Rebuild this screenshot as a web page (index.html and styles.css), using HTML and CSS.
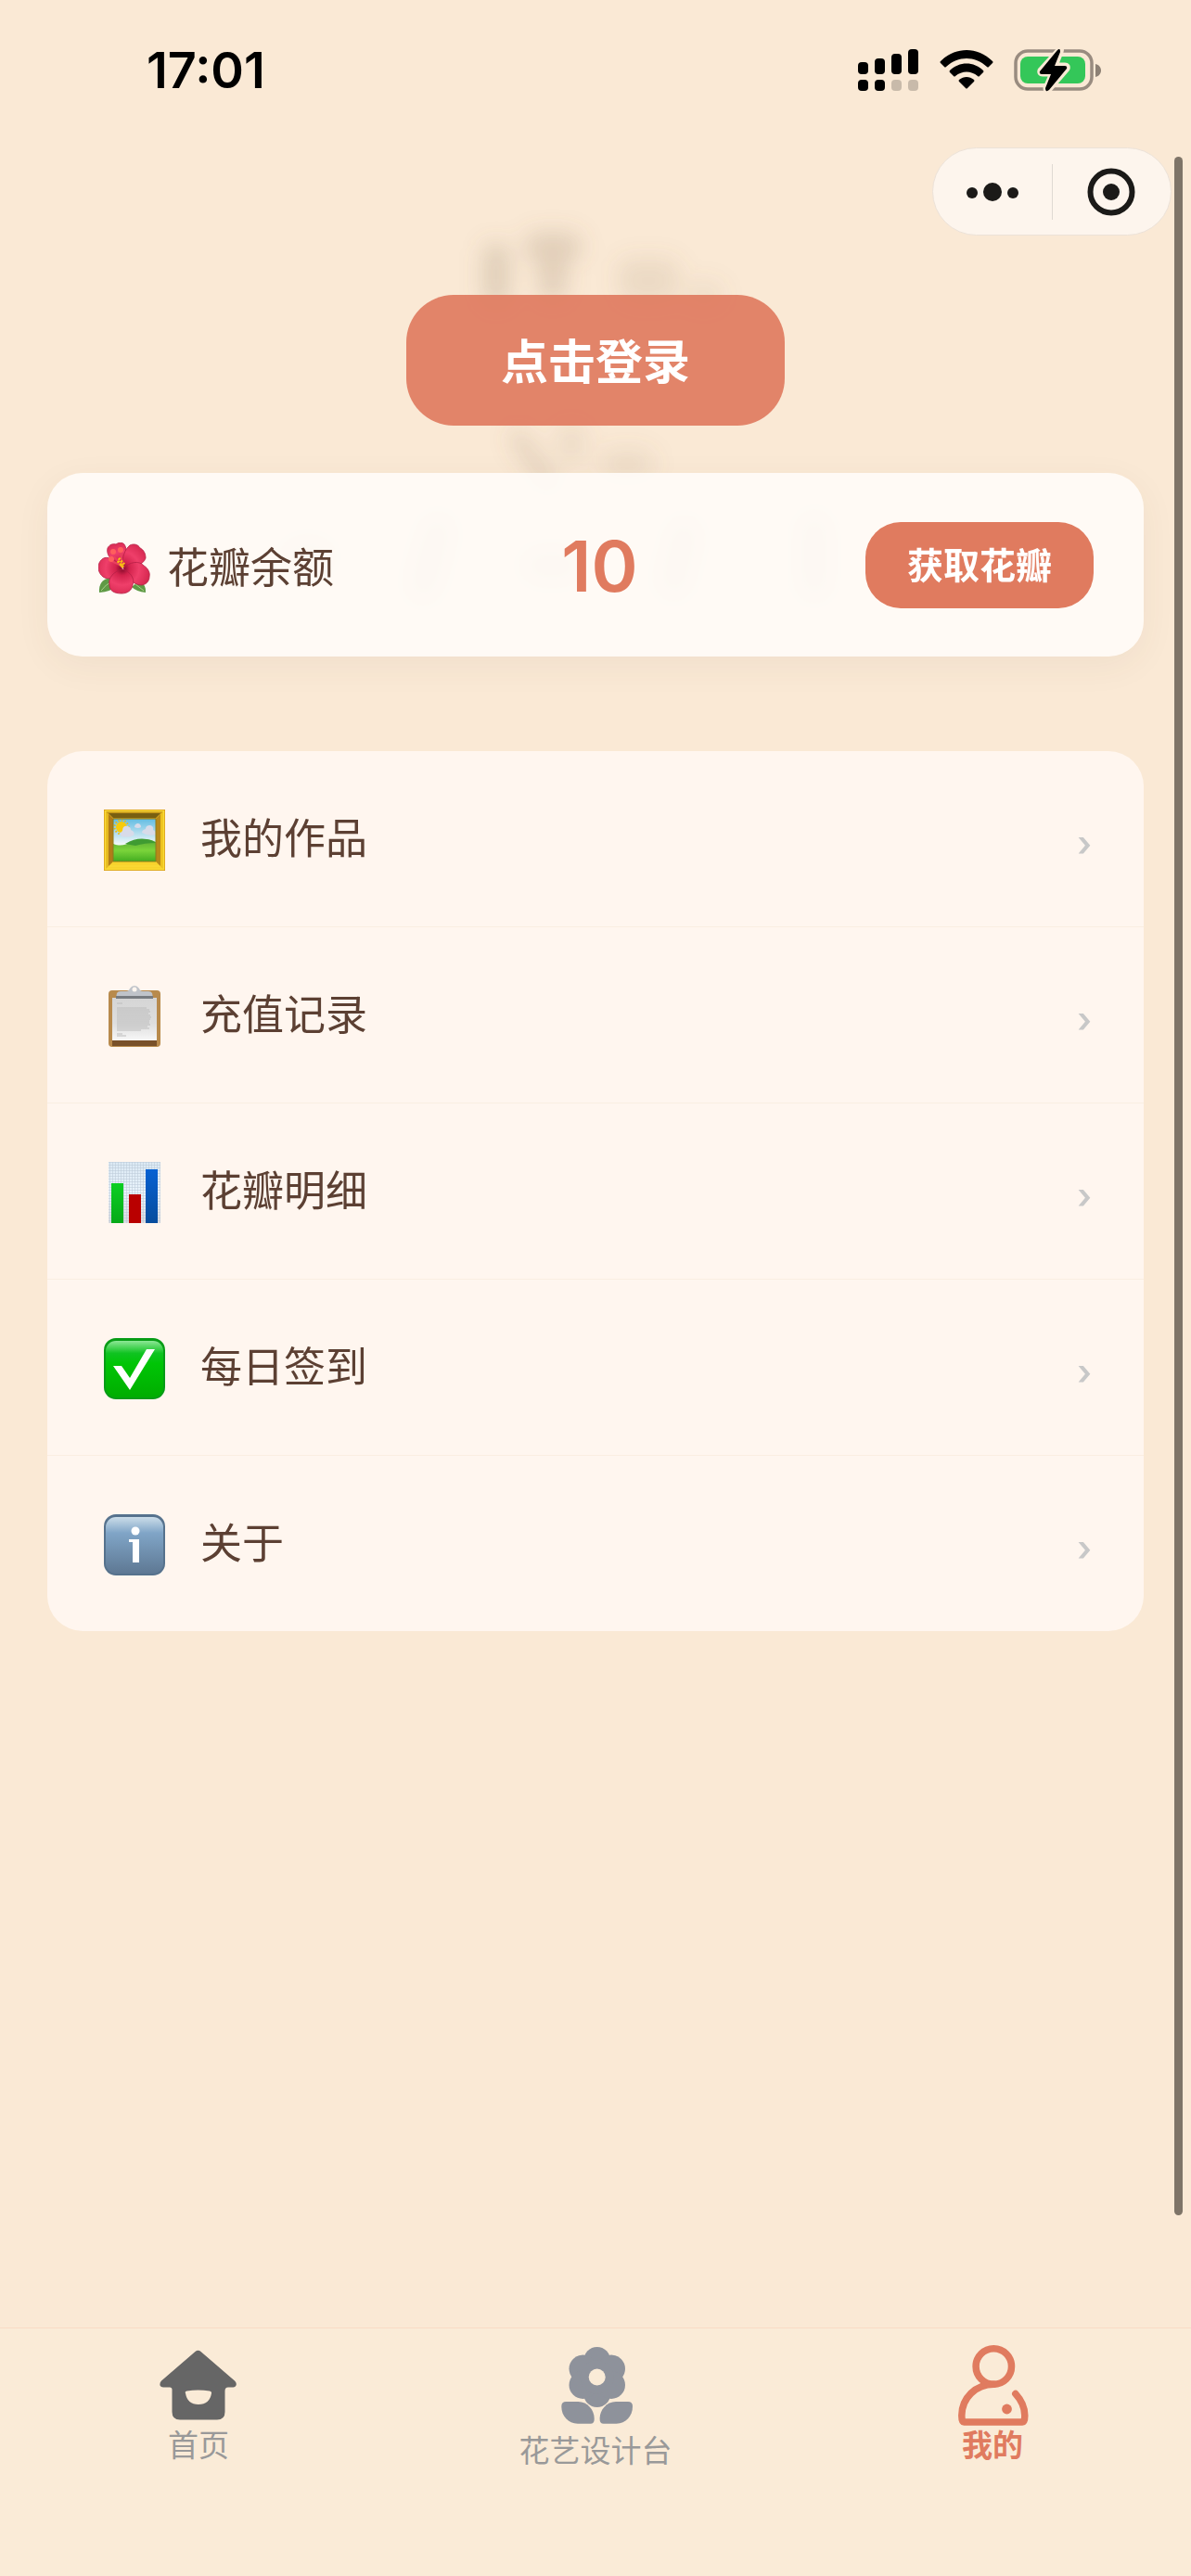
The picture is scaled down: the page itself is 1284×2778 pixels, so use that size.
FILE: index.html
```html
<!DOCTYPE html>
<html lang="zh-CN">
<head>
  <meta charset="UTF-8">
  <meta name="viewport" content="width=device-width, initial-scale=1.0">
  <title>我的</title>
  <link rel="stylesheet" href="styles.css">
</head>
<body>
  <div class="page">
    <!-- blurred backdrop -->
    <svg class="backdrop" viewBox="0 0 900 460" aria-hidden="true">
      <defs>
        <filter id="soft" x="-20%" y="-20%" width="140%" height="140%"><feGaussianBlur stdDeviation="12"/></filter>
      </defs>
      <g filter="url(#soft)" fill="none" stroke="#8a7458" stroke-linecap="round">
        <path d="M343 76v40" stroke-width="28" opacity=".24"/>
        <path d="M388 66h32M404 72v38" stroke-width="30" opacity=".22"/>
        <path d="M488 94h38M490 112h34" stroke-width="30" opacity=".13"/>
        <path d="M560 118h14" stroke-width="28" opacity=".1"/>
        <path d="M366 272l34 48" stroke-width="16" opacity=".22"/>
        <path d="M424 272v14M470 300h28" stroke-width="32" opacity=".11"/>
        <path d="M130 400h20M280 372l-16 60M388 410h30M546 376l-12 52M686 370v60" stroke-width="34" opacity=".2"/>
      </g>
    </svg>

    <div class="status-bar">
      <span class="time">17:01</span>
      <div class="status-icons">
        <svg width="66" height="46" viewBox="0 0 66 46" aria-label="信号">
          <rect x="0" y="14" width="11" height="13" rx="4"/>
          <rect x="18" y="10" width="11" height="17" rx="4"/>
          <rect x="36" y="5" width="11" height="22" rx="4"/>
          <rect x="54" y="0" width="11" height="27" rx="4"/>
          <rect x="0" y="33" width="11" height="12" rx="4"/>
          <rect x="18" y="33" width="11" height="12" rx="4"/>
          <rect x="36" y="33" width="11" height="12" rx="4" opacity=".2"/>
          <rect x="54" y="33" width="11" height="12" rx="4" opacity=".2"/>
        </svg>
        <svg width="58" height="46" viewBox="0 0 58 46" aria-label="无线网络">
          <path d="M1 13C17-3 41-3 57 13q1 1 0 2l-4 4q-1 1-2 0C38 7 20 7 7 19q-1 1-2 0l-4-4q-1-1 0-2z"/>
          <path d="M11 23c10-10 26-10 36 0q1 1 0 2l-4 4q-1 1-2 0c-7-6-17-6-24 0q-1 1-2 0l-4-4q-1-1 0-2z"/>
          <path d="M21 33c5-4 11-4 16 0q1 1 0 2l-7 7q-1 1-2 0l-7-7q-1-1 0-2z"/>
        </svg>
        <svg width="94" height="46" viewBox="0 0 94 46" aria-label="充电中">
          <rect x="2" y="2" width="82" height="41" rx="13" fill="none" stroke="#998c80" stroke-width="3.5"/>
          <path d="M88 16c8 2 8 12 0 14z" fill="#8d8175"/>
          <rect x="7" y="8" width="70" height="29" rx="8" fill="#34c759"/>
          <path d="M50 0L29 23q-1 3 2 3h11l-7 16q0 4 3 1l19-22q1-3-2-3H44l6-15q1-4 0-3z" stroke="#fae9d5" stroke-width="7" stroke-linejoin="round"/>
          <path d="M47 1L28 24q-1 3 2 3h10l-6 15q0 5 4 2l19-23q1-3-2-3H44l6-15q0-5-3-2z"/>
        </svg>
      </div>
    </div>

    <div class="capsule">
      <button class="capsule-btn" aria-label="更多">
        <svg width="56" height="20" viewBox="0 0 56 20"><circle cx="6" cy="11" r="6"/><circle cx="28" cy="10" r="10"/><circle cx="50" cy="11" r="6"/></svg>
      </button>
      <button class="capsule-btn" aria-label="关闭">
        <svg width="52" height="52" viewBox="0 0 52 52"><circle cx="26" cy="26" r="22.5" fill="none" stroke="#1b1a18" stroke-width="6"/><circle cx="26" cy="26" r="9"/></svg>
      </button>
    </div>

    <main class="content">
      <button class="login-btn">点击登录</button>

      <section class="balance-card">
        <div class="balance-label">
          <svg width="56" height="56" viewBox="0 0 56 56" aria-hidden="true">
            <defs>
              <radialGradient id="petal" gradientUnits="userSpaceOnUse" cx="26" cy="28" r="30"><stop offset="0" stop-color="#7d0826"/><stop offset=".25" stop-color="#d2224c"/><stop offset=".6" stop-color="#ef3f6a"/><stop offset="1" stop-color="#d62850"/></radialGradient>
            </defs>
            <path d="M1 54Q0 40 13 38l6 9Q14 53 1 54z" fill="#5f9a45"/>
            <path d="M51 54Q52 46 44 41l-8 7q5 5 15 6z" fill="#5f9a45"/>
            <path d="M3 52q5-7 12-10M49 52l-9-7" stroke="#a9ce89" fill="none"/>
            <g fill="url(#petal)" stroke="#b51f45" stroke-width=".8">
              <path d="M26 27C15 21 8 14 10 6c2-4 6-5 9-4 4-3 9-2 10 2 3 6 0 15-3 23z"/>
              <path d="M26 27c-1-11 3-20 8-24 4-2 9-1 11 3 4 2 6 6 6 11-3 8-14 10-25 10z"/>
              <path d="M26 29C22 39 10 41 5 37c-5-4-6-10-4-15 3-6 8-7 13-4 6 2 10 6 12 11z"/>
              <path d="M27 28c6-7 17-9 22-3 5 3 7 8 6 12 0 5-4 9-9 9-10-1-16-9-19-18z"/>
              <path d="M26 29c8 2 14 10 11 17-1 6-6 9-12 9-8 0-13-3-13-9-2-8 5-15 14-17z"/>
            </g>
            <path d="M26 27l-9-12M26 24l-2-14M25 25l-11-5" stroke="#e8405f" stroke-width="2"/>
            <path d="M22 17l7 8M21 20l6 7M24 24l3 2" stroke="#f8bd16" stroke-width="3" stroke-dasharray="2 1.5"/>
            <g fill="#ff5f5d"><circle cx="16" cy="10" r="3"/><circle cx="24" cy="8" r="3"/><circle cx="14" cy="18" r="3"/></g>
          </svg>
          <span>花瓣余额</span>
        </div>
        <strong class="balance-value">10</strong>
        <button class="get-btn">获取花瓣</button>
      </section>

      <nav class="menu">
        <a class="menu-item" href="#works">
          <svg class="menu-icon" viewBox="0 0 66 66" aria-hidden="true">
            <defs>
              <linearGradient id="sky" x2="0" y2="1"><stop offset="0" stop-color="#62bce2"/><stop offset=".6" stop-color="#f2f8f8"/></linearGradient>
              <linearGradient id="hill" x2="0" y2="1"><stop offset="0" stop-color="#58a834"/><stop offset=".5" stop-color="#7bd43b"/><stop offset="1" stop-color="#43ad20"/></linearGradient>
            </defs>
            <path d="M0 0h66v66H0z" fill="#d79b1c"/>
            <path d="M1 1h64L56 10H10z" fill="#c89a1b"/>
            <path d="M1 1l9 9v46l-9 9z" fill="#e5b81f"/>
            <path d="M65 1l-9 9v46l9 9z" fill="#edc31f"/>
            <path d="M1 65l9-9h46l9 9z" fill="#f8d32d"/>
            <path d="M1.500 1.500h63v63h-63zM5 61h56" fill="none" stroke="#f9da36" stroke-width="1.500"/>
            <path d="M5 4h56l-5 5H10z" fill="#795f11"/>
            <path d="M5 5l5 5v46l-5 5z" fill="#b17c18"/>
            <path d="M61 5l-5 5v46l5 5z" fill="#b88918"/>
            <path d="M10 10h46v46H10z" fill="url(#sky)"/>
            <path d="M10 37c8 3 13 1 21-2 10-4 17-4 25 0v21H10z" fill="url(#hill)"/>
            <path d="M23 37q12-7 23-5 7 1 10 4-12 0-22 3z" fill="#3f9b32"/>
            <circle cx="19" cy="19" r="6" fill="#f7cb0b"/>
            <circle cx="19" cy="19" r="7.500" fill="none" stroke="#edbb0d" stroke-width="2" stroke-dasharray="1.500 2"/>
            <path d="M19 29q-3-3 1-6 0-6 6-5 3 1 3 4 5 2 3 6-6 3-13 1zM41 25q0-3 4-4 0-4 5-4 4 1 3 5 3 1 3 5-8 2-15-2zM33 19q0-3 3-4 4 0 4 4-3 2-7 0z" fill="#d8dbe9"/>
            <path d="M10 10h46v46H10z" fill="none" stroke="#8b7a1c" stroke-width="1"/>
          </svg>
          <span class="menu-text">我的作品</span>
          <span class="arrow">›</span>
        </a>
        <a class="menu-item" href="#recharge">
          <svg class="menu-icon" viewBox="0 0 66 66" aria-hidden="true">
            <defs>
              <linearGradient id="paper" x2="0" y2="1"><stop offset="0" stop-color="#d5d5d5"/><stop offset=".6" stop-color="#dedede"/><stop offset="1" stop-color="#f7f7f7"/></linearGradient>
            </defs>
            <rect x="5" y="5" width="56" height="61" rx="4" fill="#b88a4c"/>
            <path d="M9 59h48v6H9z" fill="#79512a"/>
            <path d="M9 13h48v46H9z" fill="url(#paper)"/>
            <path d="M14 19h6M14 24h32M14 26h35M14 28h36M14 30h34M14 32h36M14 34h37M14 36h36M14 38h35M14 40h35M14 42h36M14 44h33M14 46h35M14 48h26M14 52h6M14 54h10" fill="none" stroke="#bcbcbc" stroke-width="1"/>
            <path d="M14 8q1-2 4-2h6q3 0 4-3 2-3 5-3t5 3q1 3 4 3h6q3 0 4 2l1 5H13z" fill="#bfc3c9"/>
            <path d="M13 11h40v3H13z" fill="#777b80"/>
            <circle cx="33" cy="4" r="2.500" fill="#fff6ef"/>
          </svg>
          <span class="menu-text">充值记录</span>
          <span class="arrow">›</span>
        </a>
        <a class="menu-item" href="#petals">
          <svg class="menu-icon" viewBox="0 0 66 66" aria-hidden="true">
            <defs>
              <pattern id="gridlines" width="3" height="3" patternUnits="userSpaceOnUse"><path d="M0 0h3M0 0v3" stroke="#b9c8d6" stroke-width="1"/></pattern>
              <linearGradient id="chartbg" x2="0" y2="1"><stop offset="0" stop-color="#dbe9f4"/><stop offset=".5" stop-color="#eaf4fc"/><stop offset="1" stop-color="#dcdce0"/></linearGradient>
              <linearGradient id="green" x2="0" y2="1"><stop offset="0" stop-color="#0bcf23"/><stop offset="1" stop-color="#07a918"/></linearGradient>
              <linearGradient id="blue" x2="0" y2="1"><stop offset="0" stop-color="#0762d3"/><stop offset="1" stop-color="#064c9d"/></linearGradient>
            </defs>
            <path d="M5 0h56v66H5z" fill="url(#chartbg)"/>
            <path d="M5 0h56v66H5z" fill="url(#gridlines)"/>
            <path d="M8 23h13v43H8z" fill="url(#green)"/>
            <path d="M27 35h13v31H27z" fill="#b90000"/>
            <path d="M45 8h13v58H45z" fill="url(#blue)"/>
          </svg>
          <span class="menu-text">花瓣明细</span>
          <span class="arrow">›</span>
        </a>
        <a class="menu-item" href="#checkin">
          <svg class="menu-icon" viewBox="0 0 66 66" aria-hidden="true">
            <defs>
              <linearGradient id="shine" x2="0" y2="1"><stop offset="0" stop-color="#8ce795"/><stop offset=".22" stop-color="#0fc321"/><stop offset=".4" stop-color="#00c506"/><stop offset="1" stop-color="#00ad00"/></linearGradient>
            </defs>
            <rect width="66" height="66" rx="13" fill="#079c16"/>
            <rect x="2" y="3" width="62" height="61" rx="11" fill="url(#shine)"/>
            <path d="M10 30h9l9 13 18-31h9L28 56z" fill="#fff"/>
          </svg>
          <span class="menu-text">每日签到</span>
          <span class="arrow">›</span>
        </a>
        <a class="menu-item" href="#about">
          <svg class="menu-icon" viewBox="0 0 66 66" aria-hidden="true">
            <defs>
              <linearGradient id="steel" x2="0" y2="1"><stop offset="0" stop-color="#cbdde9"/><stop offset=".28" stop-color="#80a5c7"/><stop offset="1" stop-color="#5e7893"/></linearGradient>
            </defs>
            <rect width="66" height="66" rx="13" fill="#56728d"/>
            <rect x="2" y="3" width="62" height="61" rx="11" fill="url(#steel)"/>
            <circle cx="34" cy="18" r="4.500" fill="#fff"/>
            <path d="M27 27h11v25h-7V30h-4z" fill="#fff"/>
          </svg>
          <span class="menu-text">关于</span>
          <span class="arrow">›</span>
        </a>
      </nav>
    </main>

    <nav class="tab-bar">
      <a class="tab" href="#home">
        <svg width="90" height="90" viewBox="0 0 90 90" aria-hidden="true">
          <path fill="#666" fill-rule="evenodd" d="M41.500 9q3-2.500 6 0L84 40.500q2.500 2.500 1.500 5-1 2-3 2H77q-3.500 0-3.500 4V74q0 8.500-8.500 8.500H25q-8.500 0-8.500-8.500V50q0-2.500-2.500-2.500H7q-2.500 0-3.500-2-.5-3 1.500-5zM31 54q-1-2 1.500-2.500 12-2 24.500 0 2.500.5 2 2.500-2 12-14 12T31 54z"/>
        </svg>
        <span>首页</span>
      </a>
      <a class="tab" href="#design">
        <svg width="90" height="96" viewBox="0 0 90 96" fill="#8e929b" aria-hidden="true">
          <mask id="core"><path d="M0 0h90v96H0z" fill="#fff"/><circle cx="46.700" cy="36.500" r="9" fill="#000"/></mask>
          <g mask="url(#core)">
            <circle cx="46.700" cy="18.500" r="14.500"/><circle cx="46.700" cy="54.500" r="14.500"/>
            <circle cx="31.500" cy="27.500" r="15"/><circle cx="31.500" cy="45" r="15"/>
            <circle cx="62" cy="27.500" r="15"/><circle cx="62" cy="45" r="15"/>
            <circle cx="46.700" cy="36.500" r="18"/>
          </g>
          <path d="M8.300 68q0-5 5-5h13c10 0 17.400 9 17.400 18v1q0 4.700-4 4.700h-14C15.700 86.700 8.300 78.700 8.300 68z"/>
          <path d="M85 68q0-5-5-5H67c-10 0-17.400 9-17.400 18v1q0 4.700 4 4.700h14C77.600 86.700 85 78.700 85 68z"/>
        </svg>
        <span>花艺设计台</span>
      </a>
      <a class="tab active" href="#me">
        <svg width="90" height="90" viewBox="0 0 90 90" fill="none" stroke="#e07b5f" stroke-width="7.500" stroke-linecap="round" stroke-linejoin="round" aria-hidden="true">
          <circle cx="46.300" cy="25" r="19.200"/>
          <path d="M46.300 44.200C27 44.200 11.800 59 11.800 78q0 7 2.500 7h63q2.500 0 2.500-7c0-9-4-17-10-23.500"/>
          <circle cx="60.500" cy="71" r="5.400" fill="#e07b5f" stroke="none"/>
        </svg>
        <span>我的</span>
      </a>
    </nav>

    <div class="scroll-thumb"></div>
  </div>
</body>
</html>
```
FILE: styles.css
```css
:root {
  --bg: #fae9d5;
  --bar: #faebd7;
  --card: #fff6ef;
  --accent: #e07b5f;
  --text: #5c4033;
  --muted: #999999;
  --side: 51px;
}
*, *::before, *::after { box-sizing: border-box; margin: 0; padding: 0; }
body {
  font-family: 'Inter', 'Noto Sans CJK SC', sans-serif;
  background: var(--bg);
  color: var(--text);
}
a { color: inherit; text-decoration: none; }
button { border: none; font-family: inherit; cursor: pointer; }
svg { display: block; flex-shrink: 0; }

.page {
  position: relative;
  display: flex;
  flex-direction: column;
  min-height: 100vh;
}
.backdrop {
  position: absolute;
  top: 200px;
  left: 50%;
  width: 900px;
  margin-left: -450px;
}

/* status bar */
.status-bar {
  display: flex;
  justify-content: space-between;
  align-items: center;
  padding: 44px 97px 51px 158px;
  color: #000;
}
.time {
  font-size: 54px;
  font-weight: 600;
  line-height: 64px;
}
.status-icons {
  display: flex;
  align-items: center;
  gap: 22px;
}

.capsule {
  display: flex;
  align-self: flex-end;
  width: 258px;
  height: 95px;
  margin-right: 21px;
  border: 1px solid #ece2d8;
  border-radius: 48px;
  background: #fdf5ed;
}
.capsule-btn {
  flex: 1;
  display: flex;
  align-items: center;
  justify-content: center;
  background: none;
  fill: #1b1a18;
}
.capsule-btn + .capsule-btn {
  background: linear-gradient(#dfd9d2, #dfd9d2) left center / 1px 60px no-repeat;
}

/* content */
.content {
  position: relative;
  display: flex;
  flex-direction: column;
  align-items: center;
  padding: 64px var(--side);
}
.login-btn {
  padding: 36px 102px 32px;
  border-radius: 51px;
  background: rgba(224, 123, 95, 0.92);
  color: #fff;
  font-size: 51px;
  font-weight: 600;
  line-height: 73px;
}
.balance-card {
  display: flex;
  align-items: center;
  justify-content: space-between;
  width: 100%;
  margin: 51px 0 102px;
  padding: 53px 54px 52px 55px;
  border-radius: 38px;
  background: rgba(255, 252, 248, 0.9);
  box-shadow: 0 10px 38px rgba(92, 64, 51, 0.06);
}
.balance-label {
  display: flex;
  align-items: center;
  gap: 18px;
  padding-top: 6px;
  font-size: 45px;
  line-height: 64px;
}
.balance-value {
  color: var(--accent);
  font-size: 76px;
  font-weight: 600;
  line-height: 90px;
}
.get-btn {
  padding: 18px 45px;
  border-radius: 38px;
  background: var(--accent);
  color: #fff;
  font-size: 39px;
  font-weight: 600;
  line-height: 57px;
}

.menu {
  width: 100%;
  border-radius: 38px;
  background: var(--card);
  overflow: hidden;
}
.menu-item {
  display: flex;
  align-items: center;
  height: 190px;
  padding: 0 56px 0 61px;
  border-bottom: 1px solid #faeee2;
}
.menu-item:last-child {
  height: 189px;
  border-bottom: none;
}
.menu-icon {
  width: 66px;
  height: 66px;
  margin-top: 2px;
}
.menu-text {
  flex: 1;
  margin-left: 38px;
  font-size: 45px;
  line-height: 64px;
}
.arrow {
  margin-top: 8px;
  color: #c8c8c8;
  font-size: 38px;
  font-weight: 600;
  line-height: 64px;
}

/* bottom tabs */
.tab-bar {
  position: relative;
  display: grid;
  grid-template-columns: repeat(3, 1fr);
  min-height: 268px;
  margin-top: auto;
  padding-top: 16px;
  border-top: 1px solid #f8dcc6;
  background: var(--bar);
}
.tab {
  display: flex;
  flex-direction: column;
  align-items: center;
  color: var(--muted);
  font-size: 33px;
  line-height: 40px;
}
.tab.active {
  color: var(--accent);
  font-weight: 600;
}

.scroll-thumb {
  position: absolute;
  top: 169px;
  right: 9px;
  bottom: 389px;
  width: 9px;
  border-radius: 5px;
  background: #7e7468;
}
```
